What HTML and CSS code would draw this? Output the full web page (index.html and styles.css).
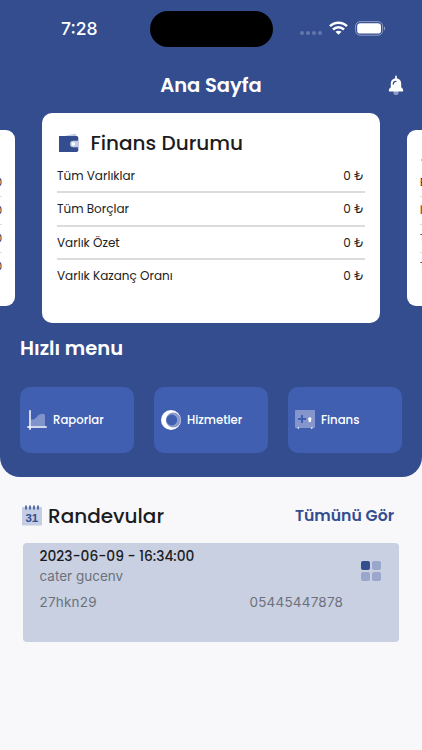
FILE: index.html
```html
<!DOCTYPE html>
<html lang="tr">
<head>
  <meta charset="UTF-8" />
  <meta name="viewport" content="width=device-width, initial-scale=1.0"/>
  <title>Ana Sayfa</title>
  <link rel="stylesheet" href="styles.css">
</head>
<body>

<header class="top">
  <!-- Status bar -->
  <div class="status">
    <span class="time">7:28</span>
    <div class="island"></div>
    <div class="status-icons">
      <div class="dots"><i></i><i></i><i></i><i></i></div>
      <svg class="wifi" width="19" height="14" viewBox="0 0 19 14" fill="none" stroke="#fff" stroke-width="2.5">
        <path d="M1 5.2C5.6.6 13.4.6 18 5.2"/>
        <path d="M4 8.5c3.1-3 7.9-3 11 0"/>
        <path d="M9.5 13.7 6.5 10.8c1.7-1.5 4.3-1.5 6 0z" fill="#fff" stroke="none"/>
      </svg>
      <svg class="battery" width="31" height="15" viewBox="0 0 31 15">
        <rect x=".6" y=".6" width="27" height="13.6" rx="4.5" fill="none" stroke="#8d9bc6"/>
        <rect x="2.2" y="2.2" width="23.8" height="10.4" rx="3.2" fill="#fff"/>
        <path d="M29 5.2c1.6.8 1.6 3.6 0 4.4z" fill="#8d9bc6"/>
      </svg>
    </div>
  </div>

  <div class="title-bar">
    <h1>Ana Sayfa</h1>
    <svg class="bell" width="16" height="21" viewBox="0 0 16 21">
      <circle cx="8" cy="17.5" r="2.6" fill="#8e9bc6"/>
      <path d="M7.2 1.3a.8.8 0 0 1 1.6 0v2c2.7.5 4.4 2.5 4.4 5.2v3.7l1.5 1.5c.3.3.4.7.4 1.1v1.7H.9v-1.7c0-.4.1-.8.4-1.1l1.5-1.5V8.5c0-2.7 1.7-4.7 4.4-5.2z" fill="#fff"/>
      <path d="M5.3 9c0-1.7 1-2.7 2.7-2.7" fill="none" stroke="#344d8f" stroke-width="1.3" stroke-linecap="round"/>
    </svg>
  </div>

  <!-- Finance cards -->
  <div class="carousel">
    <div class="side-card left">
      <div class="side-row">0</div>
      <div class="side-row">0</div>
      <div class="side-row">0</div>
      <div class="side-row">0</div>
    </div>
    <div class="card">
      <div class="card-head">
        <svg width="20" height="20" viewBox="0 0 20 20">
          <path d="M3 3.5 15.5.8c1-.2 1.700.4 1.700 1.400v2H3z" fill="#c3cde3"/>
          <path d="M0 3h17.5A1.8 1.8 0 0 1 19.3 4.8v12.4a1.8 1.8 0 0 1-1.8 1.8H0z" fill="#344d8f"/>
          <path d="M14.3 7.8h5.2v6.4h-5.2a3.2 3.2 0 0 1 0-6.4z" fill="#c3cde3"/>
          <circle cx="14.3" cy="11" r="1.7" fill="#fff"/>
        </svg>
        <h2>Finans Durumu</h2>
      </div>
      <div class="row"><span>Tüm Varlıklar</span><span>0 ₺</span></div>
      <div class="row"><span>Tüm Borçlar</span><span>0 ₺</span></div>
      <div class="row"><span>Varlık Özet</span><span>0 ₺</span></div>
      <div class="row"><span>Varlık Kazanç Oranı</span><span>0 ₺</span></div>
    </div>
    <div class="side-card right">
      <svg class="side-icon" width="16" height="16" viewBox="0 0 16 16">
        <path d="M0 8 8 2l8 6-8 6z" fill="#344d8f"/>
      </svg>
      <div class="side-row">B</div>
      <div class="side-row">İ</div>
      <div class="side-row">T</div>
      <div class="side-row">T</div>
    </div>
  </div>

  <!-- Quick menu -->
  <h2 class="menu-title">Hızlı menu</h2>
  <nav class="menu">
    <a class="tile">
      <svg width="20" height="20" viewBox="0 0 20 20">
        <path d="M4 16V9.5c3.5 0 4-.8 6-2.8 2-2.2 4-3.2 6.5-2.7 1 .2 1.5.7 1.5 1.7V16z" fill="#8093cb"/>
        <path d="M3 .8v18.4M.8 17h18.4" stroke="#fff" stroke-width="1.5" stroke-linecap="round"/>
      </svg>
      <span>Raporlar</span>
    </a>
    <a class="tile">
      <svg width="20" height="20" viewBox="0 0 20 20">
        <circle cx="10" cy="10" r="10" fill="#fff"/>
        <circle cx="12.3" cy="10" r="7.5" fill="#8b9bce"/>
        <circle cx="10.8" cy="10" r="5.4" fill="#405fb1"/>
      </svg>
      <span>Hizmetler</span>
    </a>
    <a class="tile">
      <svg width="20" height="20" viewBox="0 0 20 20">
        <rect width="20" height="18" rx="1" fill="#8496cb"/>
        <path d="M7 5v8M3 9h8" stroke="#405fb1" stroke-width="2"/>
        <path d="M14.8 7.3a1.7 1.7 0 0 1 1.2 2.9V12h-2.4v-1.8a1.7 1.7 0 0 1 1.2-2.9z" fill="#fff"/>
        <path d="M2 17.5h2.5L3.2 19.3zM15.5 17.5H18l-1.2 1.8z" fill="#fff"/>
      </svg>
      <span>Finans</span>
    </a>
  </nav>
</header>

<!-- Appointments -->
<section class="appointments">
  <div class="section-head">
    <svg width="20" height="21" viewBox="0 0 20 21">
      <rect y="2" width="20" height="18.5" rx=".8" fill="#c3cde3"/>
      <path d="M4 1v3M8 1v3M12 1v3M16 1v3" stroke="#344d8f" stroke-width="1.5" stroke-linecap="round"/>
      <text class="cal-day" x="9.8" y="16.5" text-anchor="middle">31</text>
    </svg>
    <h2>Randevular</h2>
    <a class="see-all">Tümünü Gör</a>
  </div>
  <div class="appointment">
    <div class="info">
      <p class="date">2023-06-09 - 16:34:00</p>
      <p class="name">cater gucenv</p>
      <p class="contact"><span class="plate">27hkn29</span><span>05445447878</span></p>
    </div>
    <div class="grid-icon"><i></i><i></i><i></i><i></i></div>
  </div>
</section>

</body>
</html>
```
FILE: styles.css
```css
* {
  box-sizing: border-box;
}
body {
  margin: 0;
  min-height: 750px;
  background: #f8f8fb;
  color: #1c1c1e;
  font-family: Poppins, Inter, sans-serif;
  overflow-x: hidden;
}
h1, h2, p {
  margin: 0;
}
h2 {
  font-size: 20px;
  font-weight: 500;
}
svg {
  display: block;
  flex: none;
}
.top {
  height: 477px;
  background: #344d8f;
  border-radius: 0 0 20px 20px;
  color: #fff;
}

/* status bar */
.status {
  height: 59px;
  padding: 11px 36px 0 61px;
  display: flex;
  align-items: flex-start;
}
.time {
  width: 89px;
  font: 500 17.5px/36px Inter, sans-serif;
}
.island {
  width: 123px;
  height: 36px;
  border-radius: 18px;
  background: #000;
}
.status-icons {
  display: flex;
  padding: 10px 0 0 27px;
}
.dots {
  display: flex;
  gap: 2px;
  padding-top: 10px;
}
.dots i {
  width: 4px;
  height: 4px;
  border-radius: 50%;
  background: #6477ad;
}
.wifi {
  margin-left: 7px;
}
.battery {
  margin-left: 7px;
}

.title-bar {
  height: 54px;
  padding: 0 18px 0 34px;
  display: flex;
}
h1 {
  flex: 1;
  font-size: 19.5px;
  line-height: 54px;
  font-weight: 600;
  text-align: center;
}
.bell {
  margin-top: 16px;
}

/* carousel */
.carousel {
  height: 210px;
  display: flex;
  justify-content: center;
  align-items: center;
  gap: 27px;
  overflow: hidden;
}
.card {
  flex: none;
  width: 338px;
  height: 210px;
  padding: 10px 15px;
  border-radius: 10px;
  background: #fff;
  color: #222;
}
.card-head {
  display: flex;
  align-items: center;
  gap: 12px;
  height: 37px;
  padding: 2px 2px 0 1.5px;
}
.card-head h2 {
  color: #1c1c1e;
}
.row {
  display: flex;
  justify-content: space-between;
  height: 33.4px;
  padding-right: 1px;
  border-bottom: 2px solid #dcdcdf;
  font-size: 12px;
  line-height: 32px;
}
.row:last-child {
  border: 0;
}
.side-card {
  flex: none;
  width: 283px;
  height: 176px;
  padding: 39px 13px 0;
  border-radius: 9px;
  background: #fff;
  color: #222;
}
.side-icon {
  margin: -17px 0 1px 1px;
}
.side-row {
  height: 28px;
  border-bottom: 1px solid #dcdcdf;
  font-size: 10px;
  line-height: 28px;
}
.side-row:last-child {
  border: 0;
}
.left {
  text-align: right;
}

/* quick menu */
.menu-title {
  padding: 10px 20px 0;
  font-size: 19.5px;
  line-height: 31px;
  font-weight: 600;
}
.menu {
  display: grid;
  grid-template-columns: repeat(3, 1fr);
  gap: 20px;
  padding: 23px 20px 0;
}
.tile {
  height: 66px;
  padding-left: 7px;
  display: flex;
  align-items: center;
  gap: 6px;
  border-radius: 10px;
  background: #405fb1;
  font-size: 11.7px;
  font-weight: 500;
}

/* appointments */
.appointments {
  padding: 20px 23px;
}
.section-head {
  height: 37px;
  margin-left: -1px;
  display: flex;
  align-items: center;
}
.section-head h2 {
  margin-left: 6px;
}
.see-all {
  margin: 0 5px 0 auto;
  color: #344d8f;
  font-size: 15.7px;
  line-height: 26px;
  font-weight: 600;
}
.cal-day {
  font: 600 11.5px "Liberation Sans", sans-serif;
  fill: #344d8f;
}
.appointment {
  height: 99px;
  margin-top: 9px;
  padding: 4px 18px 0 16.5px;
  display: flex;
  justify-content: space-between;
  border-radius: 4px;
  background: #c8d0e2;
}
.date {
  font-size: 13.8px;
  line-height: 20px;
  font-weight: 500;
}
.name, .contact {
  color: #6d707a;
  font: 400 13.5px/18px Inter, sans-serif;
}
.contact {
  display: flex;
  margin-top: 8px;
  letter-spacing: 0.2px;
}
.plate {
  width: 210px;
}
.grid-icon {
  display: grid;
  grid-template-columns: 9px 9px;
  grid-auto-rows: 9px;
  gap: 2px;
  padding-top: 14px;
}
.grid-icon i {
  border-radius: 2px;
  background: #9aa7ca;
}
.grid-icon i:first-child {
  background: #344d8f;
}
```
